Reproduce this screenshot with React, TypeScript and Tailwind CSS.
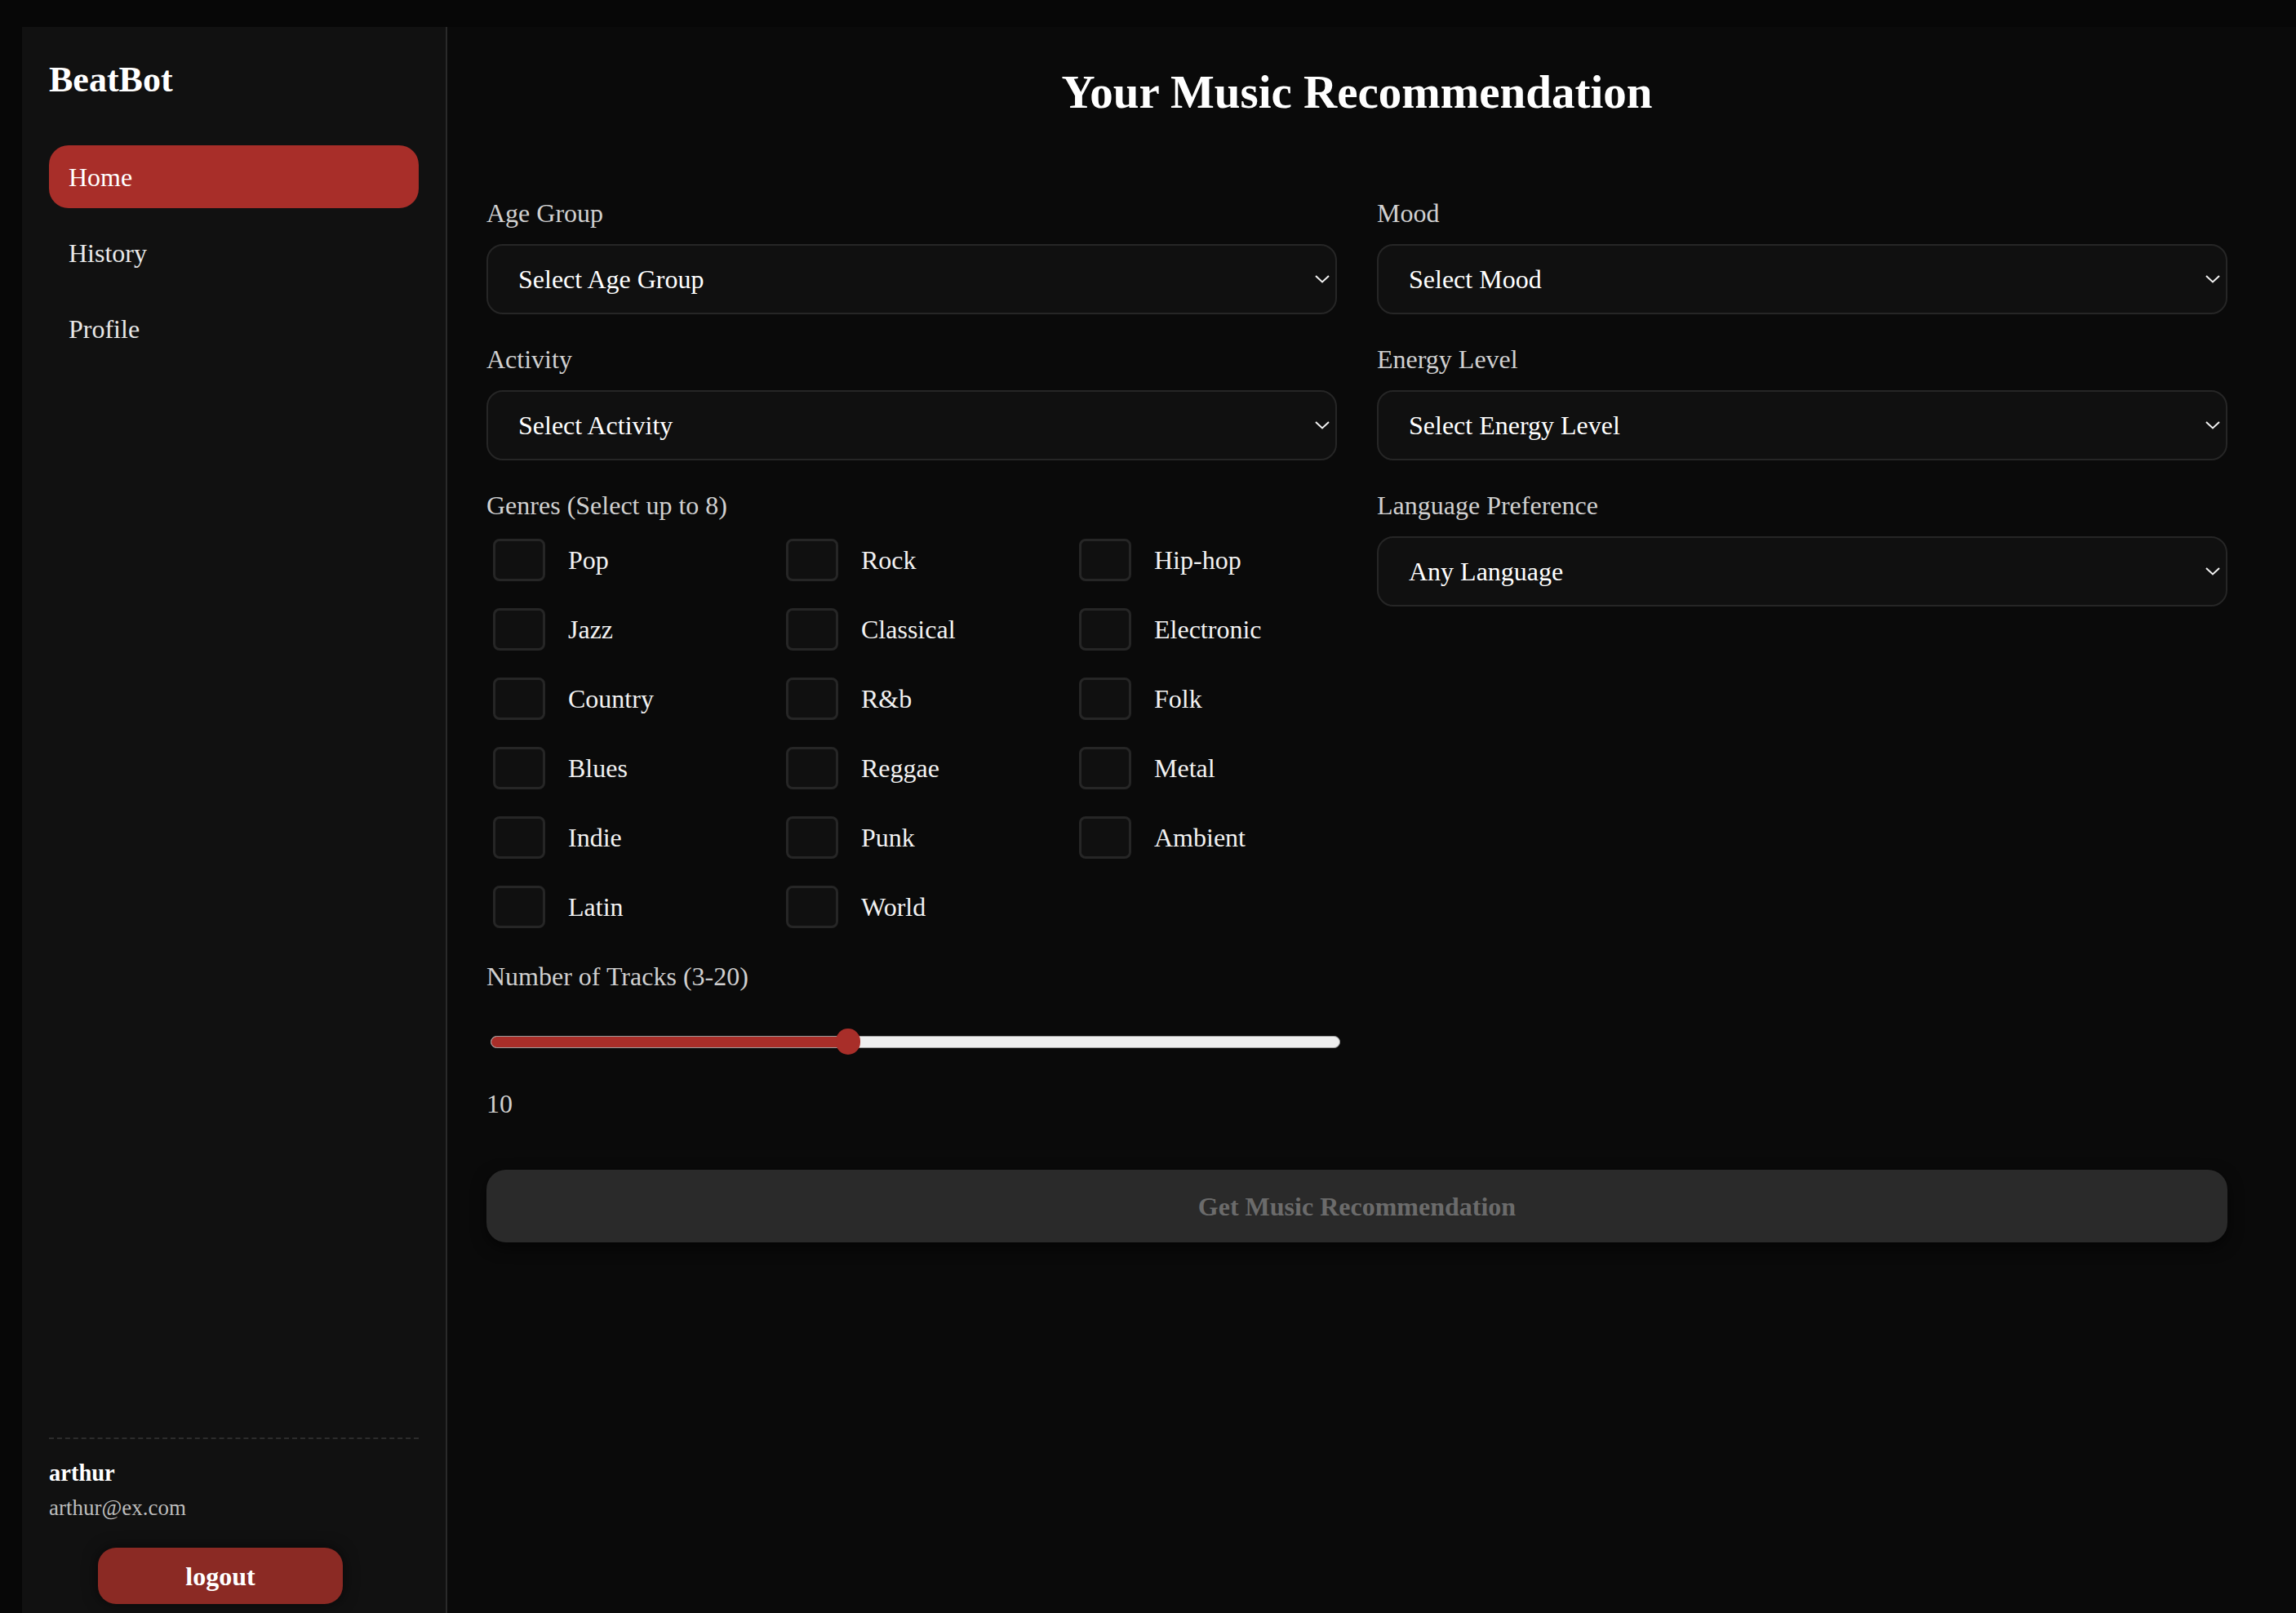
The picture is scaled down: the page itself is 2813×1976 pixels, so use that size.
import React from 'react';

const genres = [
  'Pop', 'Rock', 'Hip-hop',
  'Jazz', 'Classical', 'Electronic',
  'Country', 'R&b', 'Folk',
  'Blues', 'Reggae', 'Metal',
  'Indie', 'Punk', 'Ambient',
  'Latin', 'World',
];

const Chevron = () => (
  <svg width="18" height="10" viewBox="0 0 18 10" fill="none">
    <polyline points="1,1 9,8.5 17,1" stroke="#f2f2f2" strokeWidth="2" />
  </svg>
);

const Field = ({ label, value, last }: { label: string; value: string; last?: boolean }) => (
  <div className={last ? '' : 'mb-[37px]'}>
    <div className="mb-[19px] text-[32px] leading-[37px] text-[#d0d0d0]">{label}</div>
    <div className="flex h-[86px] items-center justify-between rounded-[20px] border-2 border-[#262626] bg-[#101010] pl-[37px] pr-[7px] text-[32px] text-white">
      <span>{value}</span>
      <Chevron />
    </div>
  </div>
);

const Sidebar = () => {
  const items = ['Home', 'History', 'Profile'];
  return (
    <aside className="flex w-[521px] shrink-0 flex-col border-r-2 border-[#2a2a2a] bg-[#111111] px-[33px] pb-[11px] pt-[39px]">
      <div className="text-[44px] font-bold leading-[51px] text-white">BeatBot</div>
      <nav className="mt-[55px] flex flex-col gap-[16px]">
        {items.map((item, i) => (
          <div
            key={item}
            className={
              i === 0
                ? 'flex h-[77px] items-center rounded-[24px] bg-[#a82e29] pl-[24px] text-[32px] text-white'
                : 'flex h-[77px] items-center rounded-[24px] pl-[24px] text-[32px] text-[#e8e8e8]'
            }
          >
            {item}
          </div>
        ))}
      </nav>
      <div className="mt-auto">
        <div className="border-t-2 border-dashed border-[#2c2c2c]" />
        <div className="mt-[25px] text-[28.5px] font-bold leading-[33px] text-white">arthur</div>
        <div className="mt-[11px] text-[27px] leading-[31px] text-[#bdbdbd]">arthur@ex.com</div>
        <button className="ml-[60px] mt-[33px] h-[69px] w-[300px] rounded-[22px] bg-[#8b2a24] text-[32px] font-bold text-white shadow-[0_0_18px_rgba(0,0,0,0.6)]">
          logout
        </button>
      </div>
    </aside>
  );
};

export default function App() {
  return (
    <div className="h-[1976px] overflow-hidden bg-[#070707] pl-[27px] pt-[33px] font-['Liberation_Serif',serif]">
      <div className="flex h-full bg-[#0a0a0a]">
        <Sidebar />
        <main className="flex-1 pl-[48px] pr-[84px] pt-[48px]">
          <h1 className="text-center text-[57px] font-bold leading-[64px] text-white">
            Your Music Recommendation
          </h1>

          <div className="mt-[98px] grid grid-cols-2 gap-x-[49px]">
            <div className="flex flex-col">
              <Field label="Age Group" value="Select Age Group" />
              <Field label="Activity" value="Select Activity" />

              <div className="text-[32px] leading-[37px] text-[#d0d0d0]">Genres (Select up to 8)</div>
              <div className="mt-[22px] grid grid-cols-[repeat(3,325px)] gap-x-[34px] gap-y-[33px]">
                {genres.map((g) => (
                  <label key={g} className="flex h-[52px] items-center gap-[28px] pl-[8px]">
                    <span className="h-[52px] w-[64px] rounded-[8px] border-[3px] border-[#262626] bg-[#101010]" />
                    <span className="text-[32px] text-[#f2f2f2]">{g}</span>
                  </label>
                ))}
              </div>

              <div className="mt-[41px] text-[32px] leading-[37px] text-[#d0d0d0]">Number of Tracks (3-20)</div>
              <div className="relative ml-[5px] mt-[45px] flex h-[32px] w-[1041px] items-center">
                <div className="h-[15px] w-full overflow-hidden rounded-full border border-[#9c9c9c] bg-[#efefef]">
                  <div className="h-full w-[430px] bg-[#a82e29]" />
                </div>
                <div className="absolute left-[423px] top-0 h-[32px] w-[30px] rounded-full bg-[#a82e29]" />
              </div>
              <div className="mt-[42px] text-[32px] leading-[37px] text-[#d0d0d0]">10</div>
            </div>

            <div className="flex flex-col">
              <Field label="Mood" value="Select Mood" />
              <Field label="Energy Level" value="Select Energy Level" />
              <Field label="Language Preference" value="Any Language" last />
            </div>
          </div>

          <button className="mt-[62px] h-[89px] w-full rounded-[24px] bg-[#2a2a2a] text-[32px] font-bold text-[#6b6b6b] shadow-[0_6px_18px_rgba(0,0,0,0.6)]">
            Get Music Recommendation
          </button>
        </main>
      </div>
    </div>
  );
}
